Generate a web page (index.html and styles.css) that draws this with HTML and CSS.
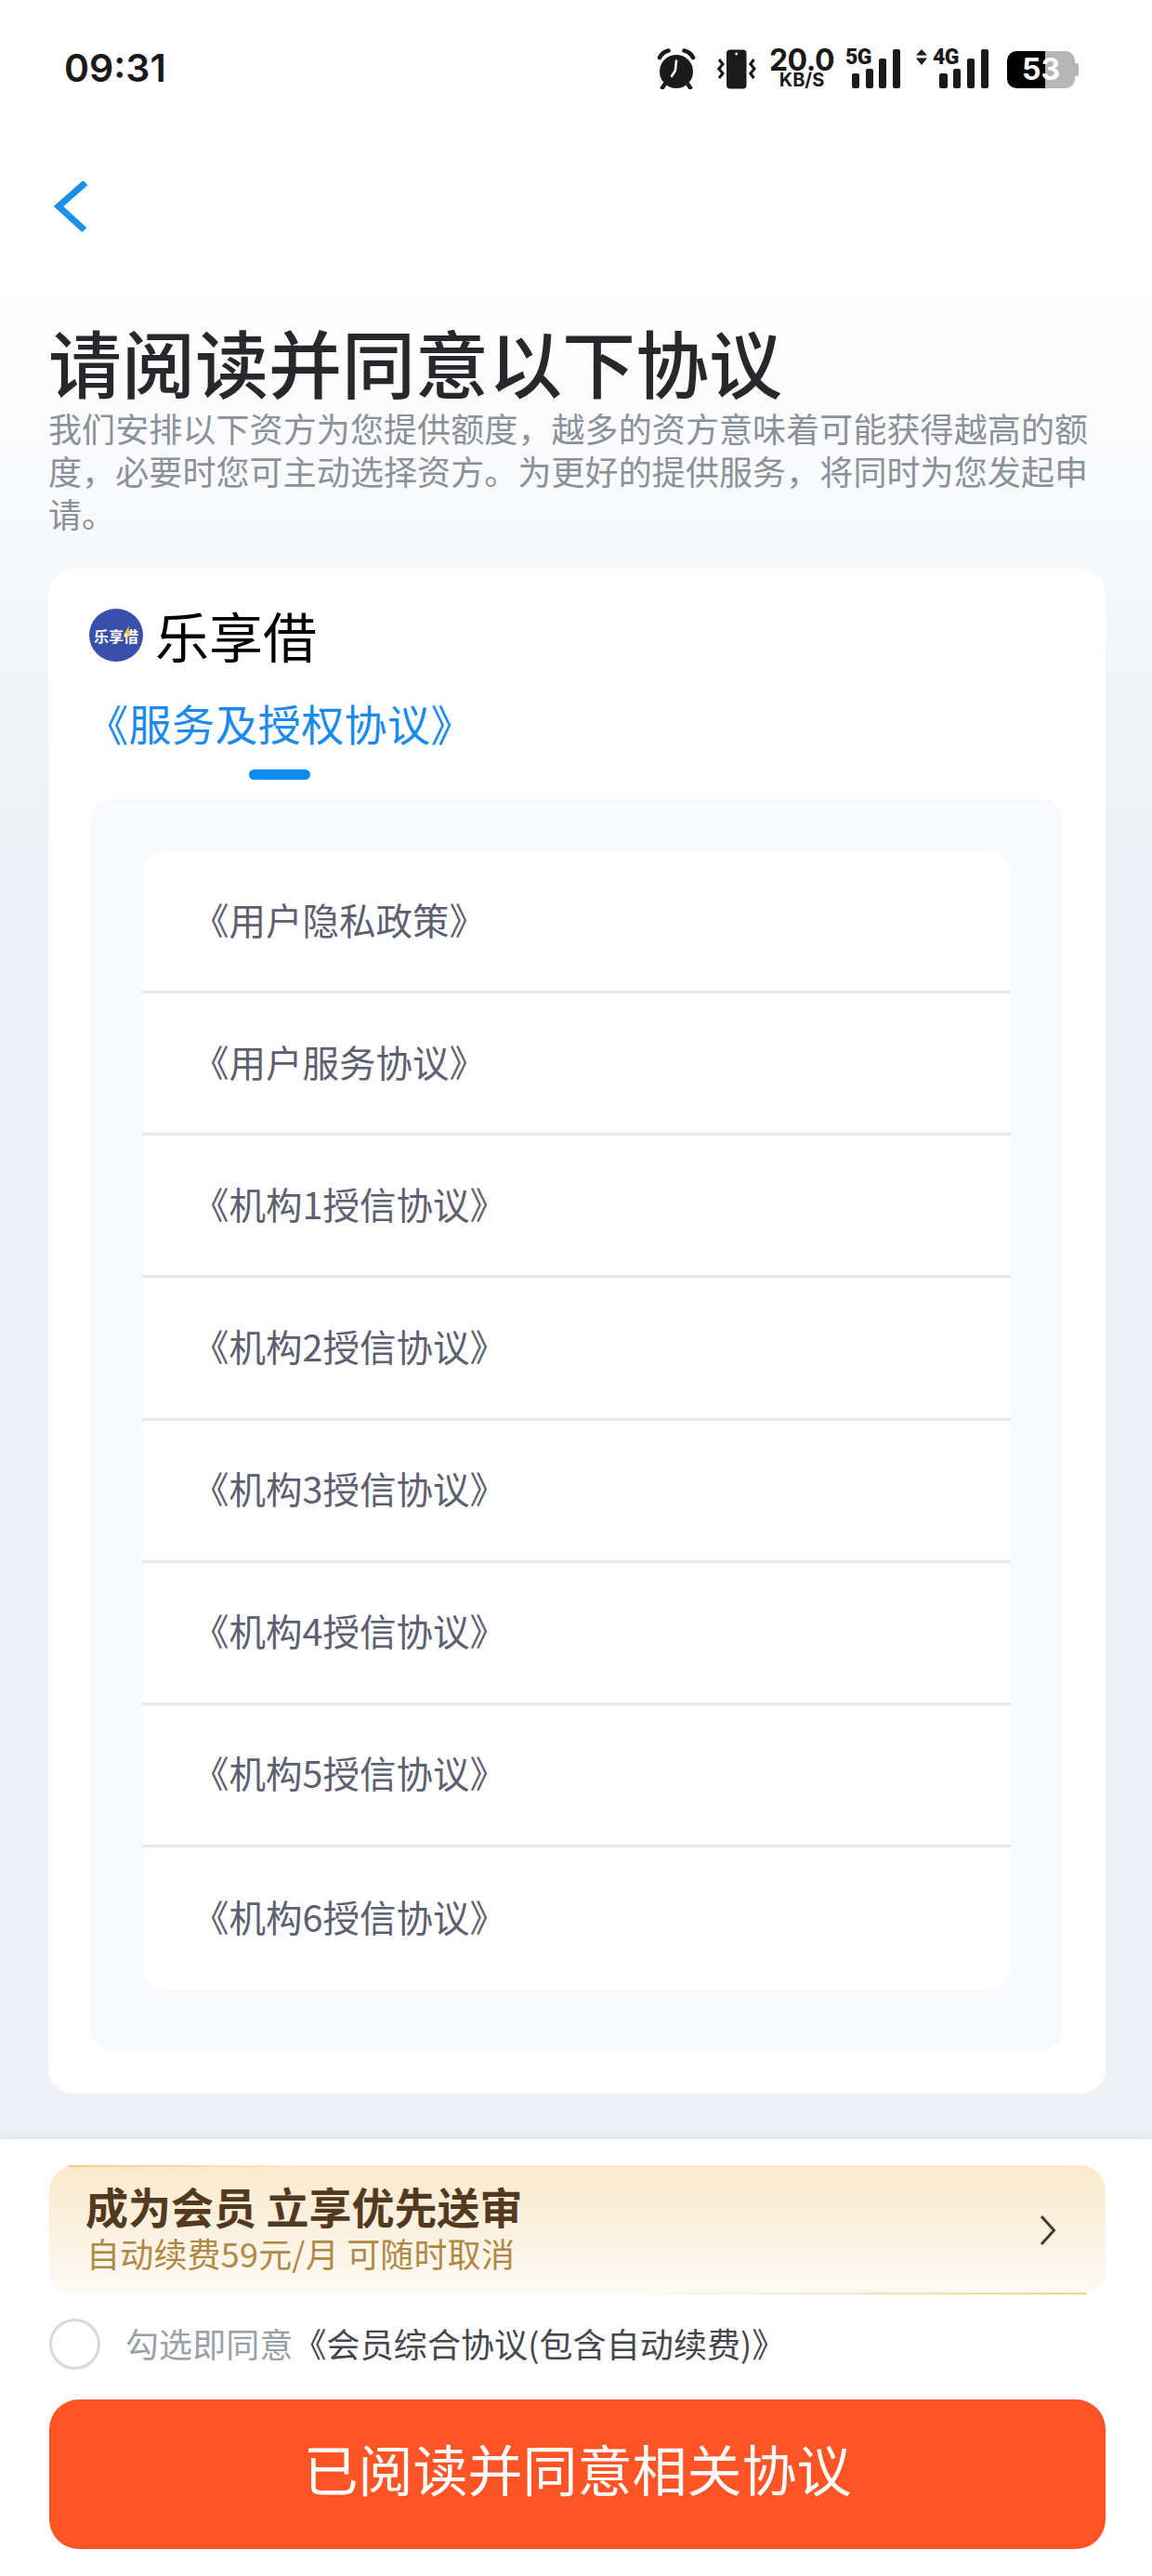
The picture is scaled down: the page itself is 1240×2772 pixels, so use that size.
FILE: index.html
```html
<!DOCTYPE html>
<html lang="zh-CN">
<head>
<meta charset="utf-8">
<title>请阅读并同意以下协议</title>
<link rel="stylesheet" href="styles.css">
</head>
<body>
<div class="page">
  <div class="status">
    <span class="time">09:31</span>
    <div class="status-icons">
      <svg class="ic-alarm" width="43" height="44" viewBox="0 0 43 44">
        <circle cx="21" cy="25" r="18" fill="#1a1a1a"/>
        <path d="M3 10 Q6 4 12.5 2.5 M39 10 Q36 4 29.5 2.5" fill="none" stroke="#1a1a1a" stroke-width="4.6" stroke-linecap="round"/>
        <path d="M9 38 L5 44 M33 38 L37 44" stroke="#1a1a1a" stroke-width="4.4"/>
        <path d="M21 13.5 L19.8 24 L16 30" fill="none" stroke="#fff" stroke-width="2.6" stroke-linecap="round" stroke-linejoin="round"/>
      </svg>
      <svg class="ic-vib" width="42" height="43" viewBox="0 0 42 43">
        <rect x="10" y="0.5" width="21.5" height="42" rx="4" fill="#1a1a1a"/>
        <circle cx="20.7" cy="5" r="1.4" fill="#fff"/>
        <path d="M2 11 L6 16 L1.8 21 L6 26 L2 31 M39.5 11 L35.8 16 L40 21 L35.8 26 L39.5 31" fill="none" stroke="#1a1a1a" stroke-width="3"/>
      </svg>
      <div class="speed"><span class="speed-num">20.0</span><span class="speed-unit">KB/S</span></div>
      <div class="sig sig-5g">
        <span class="sig-label">5G</span>
        <svg class="bars" width="52" height="42" viewBox="0 0 52 42">
          <rect x="0" y="26" width="8" height="16" rx="2" fill="#1a1a1a"/>
          <rect x="15" y="21" width="8" height="21" rx="2" fill="#1a1a1a"/>
          <rect x="29" y="10" width="8" height="32" rx="2" fill="#1a1a1a"/>
          <rect x="44" y="0" width="8" height="42" rx="2" fill="#1a1a1a"/>
        </svg>
      </div>
      <div class="sig sig-4g">
        <svg class="arrows" width="12" height="17" viewBox="0 0 12 17">
          <path d="M6 0 L12 6.5 H0 Z M6 17 L12 9.5 H0 Z" fill="#1a1a1a"/>
        </svg>
        <span class="sig-label">4G</span>
        <svg class="bars" width="53" height="42" viewBox="0 0 53 42">
          <rect x="0" y="26" width="9" height="16" rx="2" fill="#1a1a1a"/>
          <rect x="15" y="21" width="8" height="21" rx="2" fill="#1a1a1a"/>
          <rect x="30" y="10" width="8" height="32" rx="2" fill="#1a1a1a"/>
          <rect x="45" y="0" width="8" height="42" rx="2" fill="#1a1a1a"/>
        </svg>
      </div>
      <div class="batt">53</div>
    </div>
  </div>

  <div class="nav">
    <svg width="37" height="54" viewBox="0 0 37 54">
      <path d="M34 1.5 L5 27 L33 52.5" fill="none" stroke="#1b90e8" stroke-width="7"/>
    </svg>
  </div>

  <h1 class="title">请阅读并同意以下协议</h1>
  <p class="intro">我们安排以下资方为您提供额度，越多的资方意味着可能获得越高的额度，必要时您可主动选择资方。为更好的提供服务，将同时为您发起申请。</p>

  <section class="card">
    <div class="brand">
      <div class="logo"><span class="logo-text">乐享借</span>
        <svg class="bolt" width="7" height="17" viewBox="0 0 7 17"><path d="M5 0 L0 9 H3 L1.5 17 L7 6.5 H4 Z" fill="#f6c63c"/></svg>
      </div>
      <span class="brand-name">乐享借</span>
    </div>
    <div class="tab">
      <span class="tab-label">《服务及授权协议》</span>
      <span class="tab-bar"></span>
    </div>
    <div class="panel">
      <ul class="list">
        <li class="row">《用户隐私政策》</li>
        <li class="row">《用户服务协议》</li>
        <li class="row">《机构1授信协议》</li>
        <li class="row">《机构2授信协议》</li>
        <li class="row">《机构3授信协议》</li>
        <li class="row">《机构4授信协议》</li>
        <li class="row">《机构5授信协议》</li>
        <li class="row">《机构6授信协议》</li>
      </ul>
    </div>
  </section>

  <footer class="sheet">
    <div class="vip">
      <div class="vip-text">
        <div class="vip-title">成为会员 立享优先送审</div>
        <div class="vip-sub">自动续费59元/月 可随时取消</div>
      </div>
      <svg width="18" height="32" viewBox="0 0 18 32"><path d="M2 1 L15.5 16 L2 31" fill="none" stroke="#4c3a22" stroke-width="3"/></svg>
    </div>
    <div class="consent">
      <span class="radio"></span>
      <span class="consent-text"><span class="muted">勾选即同意</span>《会员综合协议(包含自动续费)》</span>
    </div>
    <button class="cta">已阅读并同意相关协议</button>
  </footer>
</div>
</body>
</html>
```
FILE: styles.css
```css
* { box-sizing: border-box; }
html, body { margin: 0; padding: 0; }
body {
  font-family: "Noto Sans CJK SC", "Noto Sans", sans-serif;
}
.page {
  width: 1240px;
  height: 2772px;
  overflow: hidden;
  display: flex;
  flex-direction: column;
  background: linear-gradient(180deg, #ffffff 0, #ffffff 300px, #eef1f5 900px, #eef1f6 100%);
}

/* status bar */
.status {
  height: 148px;
  display: flex;
  align-items: flex-start;
  justify-content: space-between;
  padding: 52px 83px 0 69px;
}
.time {
  font-family: Inter, sans-serif;
  font-weight: 600;
  font-size: 41px;
  line-height: 40px;
  margin-top: 1px;
  color: #1a1a1a;
}
.status-icons {
  display: flex;
  align-items: flex-start;
  height: 44px;
  font-family: Inter, sans-serif;
  color: #1a1a1a;
}
.ic-vib { margin-left: 22px; margin-top: 1px; }
.speed {
  margin-left: 15px;
  width: 68px;
  display: flex;
  flex-direction: column;
  align-items: center;
}
.speed-num {
  font-weight: 700;
  font-size: 32px;
  line-height: 26px;
  letter-spacing: -0.5px;
}
.speed-unit {
  font-weight: 700;
  font-size: 20px;
  line-height: 17px;
}
.sig {
  position: relative;
  height: 43px;
}
.sig-5g { width: 59px; margin-left: 13px; }
.sig-4g { width: 78px; margin-left: 17px; }
.sig .bars {
  position: absolute;
  right: 0;
  top: 1px;
}
.sig-label {
  position: absolute;
  top: 0;
  font-family: Roboto, sans-serif;
  font-weight: 900;
  font-size: 23px;
  line-height: 20px;
  letter-spacing: -0.5px;
}
.sig-5g .sig-label { left: 0; }
.sig-4g .sig-label { left: 18px; }
.arrows { position: absolute; left: 0; top: 1px; }
.batt {
  position: relative;
  margin-left: 20px;
  margin-top: 3px;
  width: 73px;
  height: 40px;
  border-radius: 10px;
  background: linear-gradient(90deg, #000 41px, #b6b6b6 41px);
  color: #fff;
  font-weight: 700;
  font-size: 32px;
  line-height: 40px;
  text-align: center;
}
.batt::after {
  content: "";
  position: absolute;
  right: -4px;
  top: 13px;
  width: 4px;
  height: 14px;
  border-radius: 0 3px 3px 0;
  background: #b6b6b6;
}

/* header */
.nav {
  height: 192px;
  padding: 47px 0 0 58px;
}
.nav svg { display: block; }
.title {
  margin: 0;
  padding-left: 52px;
  height: 97px;
  font-size: 79px;
  font-weight: 500;
  line-height: 97px;
  color: #26282b;
  white-space: nowrap;
}
.intro {
  margin: 0 48px 37px 52px;
  font-size: 36px;
  line-height: 46px;
  letter-spacing: 0.1px;
  color: #8a9199;
}

/* card */
.card {
  margin: 0 50px 0 52px;
  height: 1641px;
  padding: 43px 46px 0 44px;
  background: #fff;
  border-radius: 28px;
}
.brand {
  display: flex;
  align-items: center;
  height: 57px;
  gap: 13px;
}
.logo {
  position: relative;
  width: 58px;
  height: 57px;
  border-radius: 50%;
  background: #3a4fa9;
  display: flex;
  align-items: center;
  justify-content: center;
}
.logo-text {
  font-size: 16px;
  font-weight: 700;
  line-height: 20px;
  color: #fff;
  white-space: nowrap;
}
.bolt {
  position: absolute;
  left: 38px;
  top: 18px;
}
.brand-name {
  font-size: 58px;
  line-height: 57px;
  color: #000;
}
.tab {
  width: 414px;
  margin-left: -2px;
  height: 148px;
  display: flex;
  flex-direction: column;
  align-items: center;
}
.tab-label {
  margin-top: 35px;
  font-size: 46px;
  line-height: 60px;
  letter-spacing: 0.4px;
  color: #1a8bec;
  white-space: nowrap;
}
.tab-bar {
  margin-top: 21px;
  width: 66px;
  height: 11px;
  border-radius: 6px;
  background: #0a8cf5;
}
.panel {
  height: 1346px;
  margin-left: 1px;
  padding: 56px 56px 65px;
  background: #f8f9fd;
  border-radius: 24px;
}
.list {
  margin: 0;
  padding: 0;
  list-style: none;
  height: 1225px;
  display: grid;
  grid-template-rows: repeat(8, 1fr);
  background: #fff;
  border-radius: 24px;
}
.row {
  display: flex;
  align-items: center;
  padding: 0 0 6px 54px;
  font-size: 39.5px;
  color: #5d6070;
  border-bottom: 3px solid #e7e8ed;
}
.row:last-child { border-bottom: 0; }

/* bottom sheet */
.sheet {
  margin-top: auto;
  height: 470px;
  padding: 28px 50px 0 53px;
  background: #fff;
  box-shadow: 0 -3px 12px rgba(0, 0, 0, 0.07);
}
.vip {
  position: relative;
  height: 139px;
  padding: 0 53px 0 39px;
  display: flex;
  align-items: center;
  justify-content: space-between;
  border-radius: 28px;
  background: linear-gradient(180deg, #fae9cd 0, #fdfaf4 100%);
}
.vip::before,
.vip::after {
  content: "";
  position: absolute;
  height: 2px;
  border-radius: 2px;
}
.vip::before {
  top: 0;
  left: 20px;
  width: 240px;
  background: linear-gradient(90deg, rgba(236, 201, 110, 0.8), rgba(236, 201, 110, 0));
}
.vip::after {
  bottom: 0;
  right: 20px;
  width: 480px;
  background: linear-gradient(90deg, rgba(236, 201, 110, 0), rgba(236, 201, 110, 0.8));
}
.vip-text { padding-bottom: 8px; }
.vip-title {
  font-size: 46px;
  font-weight: 700;
  line-height: 54px;
  color: #533a1e;
  white-space: pre;
}
.vip-sub {
  margin-top: 2px;
  margin-left: 1px;
  font-size: 36px;
  line-height: 44px;
  letter-spacing: 0.2px;
  color: #b08a45;
  white-space: nowrap;
}
.consent {
  margin-top: 26px;
  height: 55px;
  display: flex;
  align-items: center;
  gap: 27px;
}
.radio {
  width: 55px;
  height: 55px;
  flex: none;
  border: 3px solid #d6d9dd;
  border-radius: 50%;
  background: #fff;
}
.consent-text {
  padding-bottom: 4px;
  font-size: 36px;
  line-height: 46px;
  letter-spacing: 0.1px;
  color: #44474d;
  white-space: nowrap;
}
.muted { color: #9aa0a8; }
.cta {
  display: block;
  margin-top: 32px;
  width: 100%;
  height: 161px;
  padding: 0 0 14px;
  border: 0;
  border-radius: 32px;
  background: #ff5526;
  color: #fff;
  font-family: inherit;
  font-size: 59px;
  line-height: 80px;
}
```
